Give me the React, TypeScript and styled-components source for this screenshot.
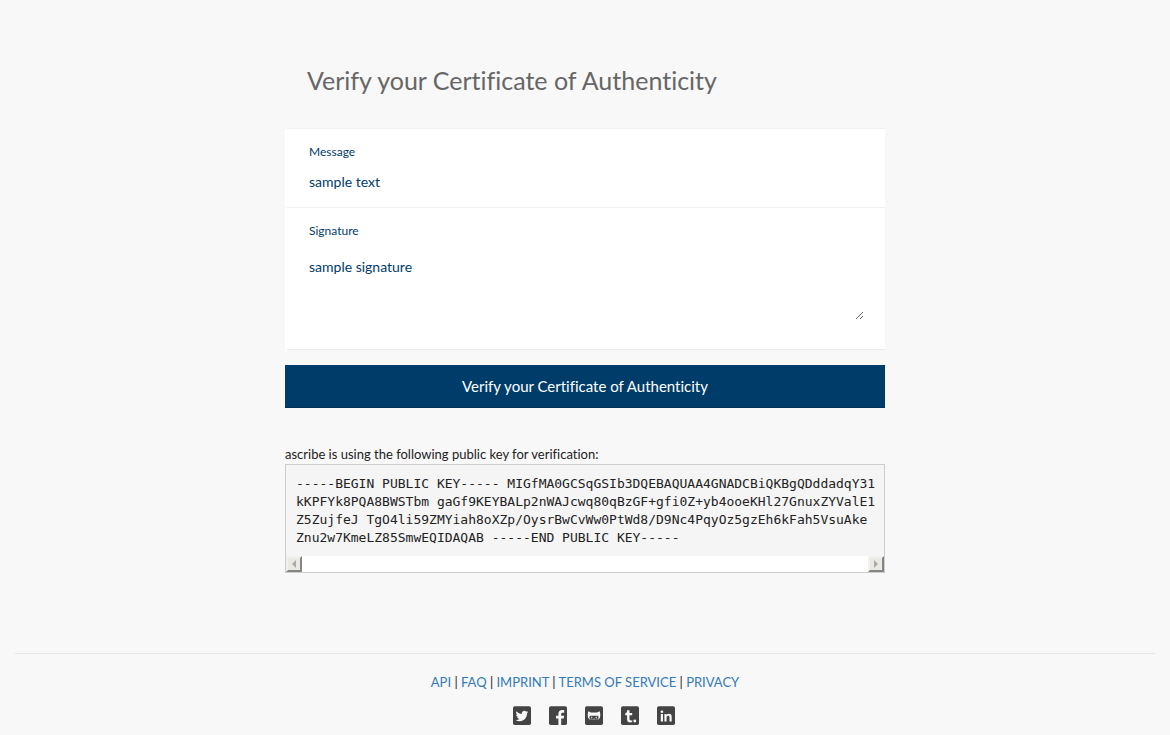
import React from 'react';
import styled, { createGlobalStyle } from 'styled-components';

const GlobalStyle = createGlobalStyle`
  *, *::before, *::after { box-sizing: border-box; }
  body {
    margin: 0;
    background: #f8f8f8;
    color: #222;
    font-family: Lato, "Liberation Sans", sans-serif;
    font-size: 14px;
    line-height: 20px;
    font-variant-ligatures: none;
  }
  button, input, textarea { font: inherit; font-variant-ligatures: none; }
`;

const Page = styled.div`
  padding: 60px 15px 0;
`;

const Main = styled.main`
  max-width: 600px;
  margin: 0 auto;
`;

const Title = styled.h1`
  margin: 0 0 28px;
  padding: 0 22px;
  color: #666;
  font-size: 25px;
  font-weight: 400;
  line-height: 40px;
`;

const Form = styled.form`
  display: flex;
  flex-direction: column;
`;

const Field = styled.div`
  display: flex;
  flex-direction: column;
  padding: 13px 21px 15px;
  background: #fff;
  border-top: 1px solid #f2f2f2;
  border-left: 3px solid #fff;

  &:nth-of-type(2) {
    padding-bottom: 29px;
    border-bottom: 1px solid #ebebeb;
  }
`;

const Label = styled.label`
  color: #003c69;
  font-size: 12px;
  line-height: 20px;
`;

const TextInput = styled.input`
  width: 100%;
  height: 20px;
  margin-top: 10px;
  padding: 0;
  border: 0;
  outline: 0;
  background: transparent;
  color: #003c69;
  font-size: 14px;
`;

const TextArea = styled.textarea`
  width: 100%;
  height: 63px;
  margin-top: 16px;
  padding: 0;
  border: 0;
  outline: 0;
  background: transparent;
  color: #003c69;
  font-size: 14px;
  line-height: 20px;
  resize: vertical;
`;

const SubmitButton = styled.button`
  height: 43px;
  margin-top: 15px;
  padding: 0 16px;
  border: 0;
  border-bottom: 1px solid #00325a;
  background: #003c69;
  color: #fff;
  font-size: 15px;
  cursor: pointer;
`;

const KeyNote = styled.p`
  margin: 36px 0 0;
  font-size: 13px;
`;

const KeyBox = styled.div`
  border: 1px solid #ccc;
  background: #f5f5f5;
`;

const Key = styled.pre`
  margin: 0;
  padding: 10px 9px 9px 10px;
  color: #222;
  font-family: "DejaVu Sans Mono", "Liberation Mono", monospace;
  font-size: 13px;
  line-height: 18px;
  white-space: pre;
  overflow: hidden;
`;

const ScrollTrack = styled.div`
  display: flex;
  justify-content: space-between;
  height: 16px;
  background: #fff;
`;

const ScrollButton = styled.button`
  display: grid;
  place-items: center;
  width: 16px;
  height: 16px;
  padding: 0;
  border: 2px solid;
  border-color: #f2f0ec #858585 #858585 #f2f0ec;
  background: #ebe9e4;
`;

const Footer = styled.footer`
  margin-top: 80px;
  padding-top: 18px;
  border-top: 1px solid #e4e6e8;
  text-align: center;
`;

const FooterNav = styled.nav`
  color: #222;
  font-size: 13px;
  line-height: 20px;
`;

const FooterLink = styled.a`
  color: #337ab7;
  text-decoration: none;
`;

const SocialList = styled.div`
  display: flex;
  justify-content: center;
  margin-top: 14px;
  padding-bottom: 10px;
`;

const SocialLink = styled.a`
  display: block;
  width: 18px;
  height: 19px;
  margin-left: 18px;

  svg { display: block; }
`;

const publicKey = [
  '-----BEGIN PUBLIC KEY----- MIGfMA0GCSqGSIb3DQEBAQUAA4GNADCBiQKBgQDddadqY31',
  'kKPFYk8PQA8BWSTbm gaGf9KEYBALp2nWAJcwq80qBzGF+gfi0Z+yb4ooeKHl27GnuxZYValE1',
  'Z5ZujfeJ TgO4li59ZMYiah8oXZp/OysrBwCvWw0PtWd8/D9Nc4PqyOz5gzEh6kFah5VsuAke',
  'Znu2w7KmeLZ85SmwEQIDAQAB -----END PUBLIC KEY-----',
].join('\n');

const footerLinks = ['API', 'FAQ', 'IMPRINT', 'TERMS OF SERVICE', 'PRIVACY'];

const socials: { name: string; mark: React.ReactNode }[] = [
  {
    name: 'Twitter',
    mark: (
      <path
        transform="translate(2.6 2.6) scale(0.53)"
        d="M23.95 4.57a10 10 0 0 1-2.82.78 4.96 4.96 0 0 0 2.16-2.73c-.95.56-2 .96-3.13 1.18a4.92 4.92 0 0 0-8.38 4.49A14 14 0 0 1 1.64 3.16a4.92 4.92 0 0 0 1.52 6.57 4.9 4.9 0 0 1-2.23-.61v.06a4.92 4.92 0 0 0 3.95 4.83 5 5 0 0 1-2.21.08 4.94 4.94 0 0 0 4.6 3.42A9.87 9.87 0 0 1 0 19.54a14 14 0 0 0 7.55 2.21c9.05 0 14-7.5 14-13.98 0-.21 0-.42-.02-.63a9.94 9.94 0 0 0 2.42-2.57z"
      />
    ),
  },
  {
    name: 'Facebook',
    mark: <path d="M9.4 18v-6.5H7V8.8h2.4V7c0-2.5 1.5-3.9 3.8-3.9 1 0 1.9.1 2 .1v2.6h-1.5c-1.2 0-1.5.6-1.5 1.4v1.6h2.9l-.4 2.7h-2.5V18z" />,
  },
  {
    name: 'GitHub',
    mark: (
      <>
        <path d="M3.2 4.2 6 5.6h6l2.8-1.4.5 3.3-.3 3.3-1.6 1.6H4.6L3 10.8l-.3-3.3z" />
        <path fill="#444" d="M5.2 8.8h7.6l.9 1.2-.8 2.6H5.1L4.3 10z" />
        <ellipse cx="6.6" cy="10.4" rx=".8" ry="1" opacity=".7" />
        <ellipse cx="11.4" cy="10.4" rx=".8" ry="1" opacity=".7" />
        <path opacity=".7" d="M8.3 11.4h1.4v.8H8.3z" />
      </>
    ),
  },
  {
    name: 'Tumblr',
    mark: (
      <>
        <path d="M6.2 3.2h2.3v2.9h2.7v2.1H8.5v3.9c0 1 .6 1.4 1.4 1.4.5 0 .9-.1 1.3-.3v1.9c-.6.3-1.3.4-2.1.4-2 0-3-1.1-3-3V8.2H4.2V6.5c1.2-.4 1.9-1.5 2-3.3z" />
        <circle cx="13.8" cy="14" r="1.4" />
      </>
    ),
  },
  {
    name: 'LinkedIn',
    mark: (
      <>
        <circle cx="4.9" cy="4.7" r="1.3" />
        <path d="M3.8 7h2.2v7.4H3.8zM7.4 7h2.1v1c.5-.8 1.3-1.2 2.4-1.2 2 0 2.8 1.2 2.8 3.2v4.4h-2.2v-4c0-1.1-.4-1.7-1.3-1.7-1.1 0-1.6.7-1.6 1.9v3.8H7.4z" />
      </>
    ),
  },
];

export default function App() {
  return (
    <>
      <GlobalStyle />
      <Page>
        <Main>
          <Title>Verify your Certificate of Authenticity</Title>
          <Form onSubmit={(event) => event.preventDefault()}>
            <Field>
              <Label htmlFor="message">Message</Label>
              <TextInput id="message" type="text" defaultValue="sample text" />
            </Field>
            <Field>
              <Label htmlFor="signature">Signature</Label>
              <TextArea id="signature" defaultValue="sample signature" />
            </Field>
            <SubmitButton type="submit">Verify your Certificate of Authenticity</SubmitButton>
          </Form>
          <KeyNote>ascribe is using the following public key for verification:</KeyNote>
          <KeyBox>
            <Key>{publicKey}</Key>
            <ScrollTrack>
              <ScrollButton type="button" aria-label="Scroll left">
                <svg width="6" height="8" viewBox="0 0 6 8"><path fill="#aaa" d="M5 0v8L1 4z" /></svg>
              </ScrollButton>
              <ScrollButton type="button" aria-label="Scroll right">
                <svg width="6" height="8" viewBox="0 0 6 8"><path fill="#aaa" d="M1 0v8l4-4z" /></svg>
              </ScrollButton>
            </ScrollTrack>
          </KeyBox>
        </Main>
        <Footer>
          <FooterNav>
            {footerLinks.map((name, index) => (
              <React.Fragment key={name}>
                {index > 0 && ' | '}
                <FooterLink href="#">{name}</FooterLink>
              </React.Fragment>
            ))}
          </FooterNav>
          <SocialList>
            {socials.map(({ name, mark }) => (
              <SocialLink key={name} href="#" aria-label={name}>
                <svg width="18" height="19" viewBox="0 -1 18 19" fill="#f8f8f8">
                  <rect y="-0.7" width="18" height="18.7" rx="1.8" fill="#444" />
                  {mark}
                </svg>
              </SocialLink>
            ))}
          </SocialList>
        </Footer>
      </Page>
    </>
  );
}
